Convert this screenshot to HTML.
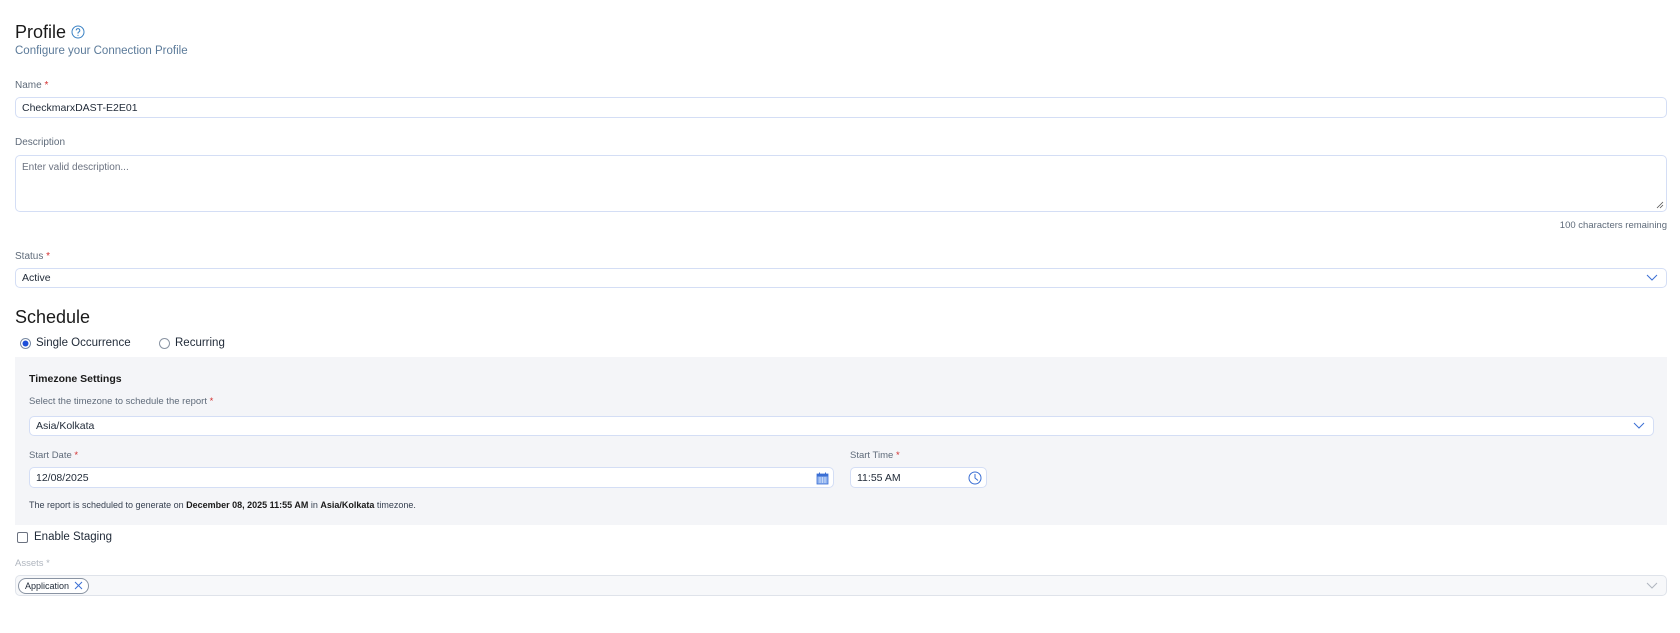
<!DOCTYPE html>
<html><head><style>
*{box-sizing:border-box;margin:0;padding:0}
body{width:1680px;height:633px;background:#fff;font-family:"Liberation Sans",sans-serif;color:#1f2937;position:relative;overflow:hidden}
.a{position:absolute;white-space:nowrap}
.lbl{font-size:10px;color:#5f6b7a}
.req{color:#d32f2f}
.inp{position:absolute;border:1px solid #d4def5;border-radius:5px;background:#fff;font-size:10.5px;color:#1f2937;padding-left:6px;display:flex;align-items:center}
.chev{position:absolute;right:8px;top:50%;margin-top:-4px}
</style></head><body>
<div class="a" style="left:15px;top:22px;font-size:18px;color:#1a1a1a">Profile</div>
<svg class="a" style="left:71px;top:25px" width="14" height="14" viewBox="0 0 14 14"><circle cx="7" cy="7" r="6" fill="none" stroke="#3b82c4" stroke-width="1"/><path d="M5.2 5.4a1.8 1.8 0 1 1 2.4 1.7c-.5.2-.6.5-.6 1v.5" fill="none" stroke="#3b82c4" stroke-width="1"/><circle cx="7" cy="10.3" r=".6" fill="#3b82c4"/></svg>
<div class="a" style="left:15px;top:45px;font-size:11.5px;color:#5b7a99">Configure your Connection Profile</div>

<div class="a lbl" style="left:15px;top:80px">Name <span class="req">*</span></div>
<div class="inp" style="left:15px;top:97px;width:1652px;height:21px">CheckmarxDAST-E2E01</div>

<div class="a lbl" style="left:15px;top:137px">Description</div>
<div class="inp" style="left:15px;top:155px;width:1652px;height:57px;align-items:flex-start;padding-top:6px;color:#6b7280;font-size:10px">Enter valid description...</div>
<svg class="a" style="left:1656px;top:201px" width="8" height="8"><path d="M1 7L7 1M4 7L7 4" stroke="#555" stroke-width="0.8"/></svg>
<div class="a lbl" style="right:13px;top:220px;font-size:9.5px">100 characters remaining</div>

<div class="a lbl" style="left:15px;top:251px">Status <span class="req">*</span></div>
<div class="inp" style="left:15px;top:268px;width:1652px;height:20px">Active<svg class="chev" width="12" height="7"><path d="M1 1l5 5 5-5" fill="none" stroke="#3b6fd4" stroke-width="1"/></svg></div>

<div class="a" style="left:15px;top:307px;font-size:18px;color:#1a1a1a">Schedule</div>
<svg class="a" style="left:20px;top:338px" width="11" height="11"><circle cx="5.5" cy="5.5" r="5" fill="#fff" stroke="#7a8aa3"/><circle cx="5.5" cy="5.5" r="3" fill="#1d4ed8"/></svg>
<div class="a" style="left:36px;top:337px;font-size:11.5px">Single Occurrence</div>
<svg class="a" style="left:159px;top:338px" width="11" height="11"><circle cx="5.5" cy="5.5" r="5" fill="#fff" stroke="#8a94a3"/></svg>
<div class="a" style="left:175px;top:337px;font-size:11.5px">Recurring</div>

<div class="a" style="left:15px;top:357px;width:1652px;height:168px;background:#f4f5f8"></div>
<div class="a" style="left:29px;top:373px;font-size:10.5px;font-weight:bold;color:#1a1a1a">Timezone Settings</div>
<div class="a lbl" style="left:29px;top:396px;font-size:9.5px">Select the timezone to schedule the report <span class="req">*</span></div>
<div class="inp" style="left:29px;top:416px;width:1625px;height:20px">Asia/Kolkata<svg class="chev" width="12" height="7"><path d="M1 1l5 5 5-5" fill="none" stroke="#3b6fd4" stroke-width="1"/></svg></div>

<div class="a lbl" style="left:29px;top:450px;font-size:9.5px">Start Date <span class="req">*</span></div>
<div class="inp" style="left:29px;top:467px;width:805px;height:21px">12/08/2025
<svg class="a" style="right:4px;top:4px" width="13" height="13" viewBox="0 0 13 13"><rect x="1" y="2" width="11" height="10" fill="#8fb2ee" stroke="#3b6fd4" stroke-width="0.8"/><rect x="1" y="2" width="11" height="2.5" fill="#3b6fd4"/><path d="M3.5 6h1M6 6h1M8.5 6h1M3.5 8h1M6 8h1M8.5 8h1M3.5 10h1M6 10h1M8.5 10h1" stroke="#fff" stroke-width="1"/><path d="M3.5 .5v2M9.5 .5v2" stroke="#3b6fd4"/></svg></div>

<div class="a lbl" style="left:850px;top:450px;font-size:9.5px">Start Time <span class="req">*</span></div>
<div class="inp" style="left:850px;top:467px;width:137px;height:21px">11:55 AM
<svg class="a" style="right:4px;top:3px" width="14" height="14" viewBox="0 0 14 14"><circle cx="7" cy="7" r="6" fill="none" stroke="#3b6fd4" stroke-width="1"/><path d="M7 3v4l3 2.5" fill="none" stroke="#3b6fd4" stroke-width="1"/></svg></div>

<div class="a" style="left:29px;top:500px;font-size:9px;color:#374151">The report is scheduled to generate on <b style="color:#1a1a1a">December 08, 2025 11:55 AM</b> in <b style="color:#1a1a1a">Asia/Kolkata</b> timezone.</div>

<div class="a" style="left:17px;top:532px;width:11px;height:11px;border:1px solid #6b7280;border-radius:2px;background:#fff"></div>
<div class="a" style="left:34px;top:531px;font-size:11.5px">Enable Staging</div>

<div class="a lbl" style="left:15px;top:558px;font-size:9.5px;color:#b0b6bf">Assets *</div>
<div class="inp" style="left:15px;top:575px;width:1652px;height:21px;background:#f7f8fa;border-color:#dfe3ea;padding-left:2px">
<div style="border:1px solid #8a94a3;border-radius:9px;height:16px;width:71px;display:flex;align-items:center;padding-left:6px;font-size:9px;background:#fff;color:#1f2937">Application<svg style="margin-left:5px" width="9" height="9"><path d="M1 1l7 7M8 1l-7 7" stroke="#3b6fd4" stroke-width="1"/></svg></div>
<svg class="chev" width="12" height="7"><path d="M1 1l5 5 5-5" fill="none" stroke="#b0b6bf" stroke-width="1"/></svg></div>
</body></html>
